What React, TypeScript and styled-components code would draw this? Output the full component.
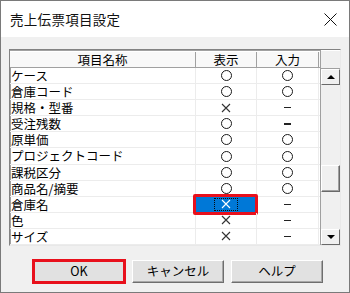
import React from "react";
import styled, { createGlobalStyle } from "styled-components";

const Global = createGlobalStyle`
  html, body { margin: 0; padding: 0; background: #ffffff; }
  body { font-family: "Noto Sans CJK JP", "Noto Sans", sans-serif; }
  * { box-sizing: border-box; }
`;

const Window = styled.div`
  width: 350px;
  height: 293px;
  border: 1px solid #7a7a7a;
  background: #f0f0f0;
  display: flex;
  flex-direction: column;
  overflow: hidden;
`;

const TitleBar = styled.div`
  height: 36px;
  background: #ffffff;
  display: flex;
  align-items: center;
  justify-content: space-between;
  padding: 0 10px 0 9px;
  flex-shrink: 0;
`;

const Title = styled.div`
  font-size: 13.5px;
  line-height: 18px;
  color: #111;
  letter-spacing: 0.3px;
`;

const Close = styled.svg`
  width: 13px;
  height: 13px;
  margin-right: 2px;
`;

const Client = styled.div`
  flex: 1;
  display: flex;
  flex-direction: column;
  padding: 12px 8px 0 8px;
`;

const ListBox = styled.div`
  width: 332px;
  height: 197px;
  border: 1px solid #828282;
  border-right-color: #e8e8e8;
  border-bottom-color: #e8e8e8;
  background: #ffffff;
  display: flex;
  box-shadow: inset 1px 1px 0 #a0a0a0;
`;

const Grid = styled.div`
  width: 310px;
  display: flex;
  flex-direction: column;
`;

const HeaderRow = styled.div`
  display: grid;
  grid-template-columns: 186px 61px 62px;
  height: 17px;
  background: #f8f8f8;
  border-bottom: 1px solid #a0a0a0;
  margin-top: 1px;
  border-top: 1px solid #ffffff;
`;

const HeadCell = styled.div`
  font-size: 12.5px;
  line-height: 15px;
  text-align: center;
  color: #000;
  border-right: 1px solid #a0a0a0;
`;

const Row = styled.div`
  display: grid;
  grid-template-columns: 186px 61px 62px;
  height: 16.3px;
  border-bottom: 1px solid #ececec;
`;

const NameCell = styled.div`
  font-size: 12.5px;
  line-height: 15px;
  padding-left: 1px;
  color: #000;
  white-space: nowrap;
  border-right: 1px solid #ececec;
`;

const MarkCell = styled.div<{ $selected?: boolean }>`
  position: relative;
  display: flex;
  align-items: center;
  justify-content: center;
  border-right: 1px solid #ececec;
  background: ${(p) => (p.$selected ? "#0078d7" : "transparent")};
`;

const Circle = styled.span`
  width: 11px;
  height: 11px;
  border: 1.4px solid #1a1a1a;
  border-radius: 50%;
`;

const Dash = styled.span`
  width: 7px;
  height: 1.5px;
  background: #222;
`;

const Cross = styled.svg`
  width: 10px;
  height: 10px;
`;

const Focus = styled.span`
  display: flex;
  align-items: center;
  justify-content: center;
  width: 24px;
  height: 13px;
  border: 1px dotted #0a0a0a;
`;

const Highlight = styled.span`
  position: absolute;
  left: -3px;
  top: -3px;
  right: -2px;
  bottom: -3px;
  border: 3px solid #e8101c;
  border-radius: 2px;
  pointer-events: none;
`;

const ScrollCol = styled.div`
  width: 20px;
  display: flex;
  flex-direction: column;
  background: #f0f0f0;
  border-left: 1px solid #a0a0a0;
`;

const Corner = styled.div`
  height: 19px;
  background: #f0f0f0;
  border-top: 1px solid #ffffff;
  border-bottom: 1px solid #a0a0a0;
`;

const ArrowBtn = styled.div`
  height: 16px;
  background: #f0f0f0;
  border: 1px solid #ffffff;
  border-right-color: #696969;
  border-bottom-color: #696969;
  display: flex;
  align-items: center;
  justify-content: center;
`;

const Track = styled.div`
  flex: 1;
  display: flex;
  flex-direction: column;
  padding-top: 80px;
`;

const Thumb = styled.div`
  height: 27px;
  background: #f0f0f0;
  border: 1px solid #ffffff;
  border-right-color: #696969;
  border-bottom-color: #696969;
  box-shadow: inset -1px -1px 0 #a0a0a0;
`;

const Spacer = styled.div`
  flex: 1;
`;

const Tri = styled.span<{ $down?: boolean }>`
  width: 0;
  height: 0;
  border-left: 4px solid transparent;
  border-right: 4px solid transparent;
  ${(p) =>
    p.$down
      ? "border-top: 4px solid #000;"
      : "border-bottom: 4px solid #000;"}
`;

const ButtonBar = styled.div`
  display: flex;
  justify-content: center;
  gap: 7px;
  padding-top: 14px;
  padding-left: 6px;
`;

const Button = styled.div`
  position: relative;
  width: 92px;
  height: 23px;
  background: #e1e1e1;
  border: 1px solid #ffffff;
  border-right-color: #6e6e6e;
  border-bottom-color: #6e6e6e;
  box-shadow: inset -1px -1px 0 #a8a8a8;
  font-size: 12.5px;
  line-height: 20px;
  text-align: center;
  color: #000;
`;

const ButtonMark = styled.span`
  position: absolute;
  left: -2px;
  top: -2px;
  right: -2px;
  bottom: -2px;
  border: 3px solid #e8101c;
  pointer-events: none;
`;

type Mark = "o" | "x" | "-";

const rows: { name: string; show: Mark; input: Mark; sel?: boolean }[] = [
  { name: "ケース", show: "o", input: "o" },
  { name: "倉庫コード", show: "o", input: "o" },
  { name: "規格・型番", show: "x", input: "-" },
  { name: "受注残数", show: "o", input: "-" },
  { name: "原単価", show: "o", input: "o" },
  { name: "プロジェクトコード", show: "o", input: "o" },
  { name: "課税区分", show: "o", input: "o" },
  { name: "商品名/摘要", show: "o", input: "o" },
  { name: "倉庫名", show: "x", input: "-", sel: true },
  { name: "色", show: "x", input: "-" },
  { name: "サイズ", show: "x", input: "-" },
];

const CrossIcon = ({ color }: { color: string }) => (
  <Cross viewBox="0 0 10 10">
    <path d="M1 1 L9 9 M9 1 L1 9" stroke={color} strokeWidth="1.1" fill="none" />
  </Cross>
);

const MarkView = ({ m, selected }: { m: Mark; selected?: boolean }) => {
  if (m === "o") return <Circle />;
  if (m === "-") return <Dash />;
  if (selected)
    return (
      <Focus>
        <CrossIcon color="#ffffff" />
      </Focus>
    );
  return <CrossIcon color="#333" />;
};

export default function App() {
  return (
    <>
      <Global />
      <Window>
        <TitleBar>
          <Title>売上伝票項目設定</Title>
          <Close viewBox="0 0 13 13">
            <path d="M0.5 0.5 L12.5 12.5 M12.5 0.5 L0.5 12.5" stroke="#111" strokeWidth="1" fill="none" />
          </Close>
        </TitleBar>
        <Client>
          <ListBox>
            <Grid>
              <HeaderRow>
                <HeadCell>項目名称</HeadCell>
                <HeadCell>表示</HeadCell>
                <HeadCell>入力</HeadCell>
              </HeaderRow>
              {rows.map((r) => (
                <Row key={r.name}>
                  <NameCell>{r.name}</NameCell>
                  <MarkCell $selected={r.sel}>
                    <MarkView m={r.show} selected={r.sel} />
                    {r.sel && <Highlight />}
                  </MarkCell>
                  <MarkCell>
                    <MarkView m={r.input} />
                  </MarkCell>
                </Row>
              ))}
            </Grid>
            <ScrollCol>
              <Corner />
              <ArrowBtn>
                <Tri />
              </ArrowBtn>
              <Track>
                <Thumb />
                <Spacer />
              </Track>
              <ArrowBtn>
                <Tri $down />
              </ArrowBtn>
            </ScrollCol>
          </ListBox>
          <ButtonBar>
            <Button>
              OK
              <ButtonMark />
            </Button>
            <Button>キャンセル</Button>
            <Button>ヘルプ</Button>
          </ButtonBar>
        </Client>
      </Window>
    </>
  );
}
